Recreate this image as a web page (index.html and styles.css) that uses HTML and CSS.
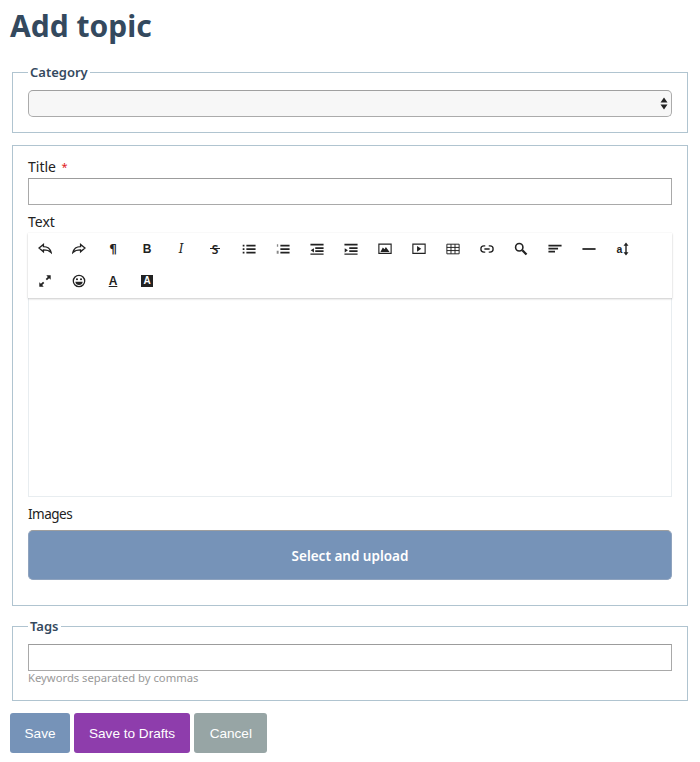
FILE: index.html
```html
<!DOCTYPE html>
<html lang="en">
<head>
<meta charset="utf-8">
<title>Add topic</title>
<link rel="stylesheet" href="styles.css">
</head>
<body>
<main class="page">
  <h1 class="page-title">Add topic</h1>
  <form class="topic-form">
    <fieldset class="group group-category">
      <legend class="group-legend">Category</legend>
      <div class="fake-select">
        <svg class="select-arrows" viewBox="0 0 8 13"><path d="M4 .5 7.500 5.500H.500zM4 12.500.5 7.500h7z"/></svg>
      </div>
    </fieldset>

    <fieldset class="group group-main">
      <label class="field-label">Title <span class="required">*</span></label>
      <input class="text-input" type="text">
      <label class="field-label label-text">Text</label>
      <div class="editor">
        <div class="toolbar">
          <button type="button" class="tool"><svg class="ico" viewBox="0 0 16 16"><path class="line" d="M1.2 6.8 6.2 2.8V5.2C10.5 5.2 13.8 7 15 12 12.6 9.6 10 9 6.2 9V11.2Z"/></svg></button>
          <button type="button" class="tool"><svg class="ico" viewBox="0 0 16 16"><path class="line" d="M14.8 6.8 9.8 2.8V5.2C5.5 5.2 2.2 7 1 12 3.4 9.6 6 9 9.8 9V11.2Z"/></svg></button>
          <button type="button" class="tool glyph glyph-para">¶</button>
          <button type="button" class="tool glyph glyph-b">B</button>
          <button type="button" class="tool glyph glyph-i">I</button>
          <button type="button" class="tool glyph glyph-s">S</button>
          <button type="button" class="tool"><svg class="ico" viewBox="0 0 16 16"><path d="M5 3h10.500v2H5zM5 7h10.500v2H5zM5 11h10.500v2H5zM.8 3h2v2h-2zM.8 7h2v2h-2zM.8 11h2v2h-2z"/></svg></button>
          <button type="button" class="tool"><svg class="ico" viewBox="0 0 16 16"><path d="M5 3h10.500v2H5zM5 7h10.500v2H5zM5 11h10.500v2H5z"/><path class="faint" d="M1 2.500h1.500v3H1zM.8 10h2.200v3.500H.8z"/></svg></button>
          <button type="button" class="tool"><svg class="ico" viewBox="0 0 16 16"><path d="M.5 2h15v2H.500zM6 6h9.500v2H6zM6 9.500h9.500v2H6zM.5 13h15v1.500H.500zM.8 9.500 4.500 7v5z"/></svg></button>
          <button type="button" class="tool"><svg class="ico" viewBox="0 0 16 16"><path d="M.5 2h15v2H.500zM6 6h9.500v2H6zM6 9.500h9.500v2H6zM.5 13h15v1.500H.500zM4.500 9.500.8 7v5z"/></svg></button>
          <button type="button" class="tool"><svg class="ico" viewBox="0 0 16 16"><path class="frame" d="M1 2.500h14v10.500H1z"/><path d="M2.800 11.500 5.500 6.200 7.500 8.200 9 5.800 13.200 11.500z"/></svg></button>
          <button type="button" class="tool"><svg class="ico" viewBox="0 0 16 16"><path class="frame" d="M1 2.500h14v10.500H1z"/><path d="M5.800 4.500 10.500 7.800 5.800 11z"/></svg></button>
          <button type="button" class="tool"><svg class="ico" viewBox="0 0 16 16"><path class="thin" d="M1 2.500h14v11H1zM1 6.200h14M1 9.800h14M5.700 2.500v11M10.300 2.500v11"/></svg></button>
          <button type="button" class="tool"><svg class="ico" viewBox="0 0 16 16"><path class="line" d="M6 4.500H4.500a3.500 3.500 0 0 0 0 7H6M10 4.500h1.500a3.500 3.500 0 0 1 0 7H10M5 8h6"/></svg></button>
          <button type="button" class="tool"><svg class="ico" viewBox="0 0 16 16"><circle class="lens" cx="6" cy="6" r="4.200"/><path class="handle" d="M9.500 9.500 14.300 14.300"/></svg></button>
          <button type="button" class="tool"><svg class="ico" viewBox="0 0 16 16"><path d="M.5 3h15v2H.500zM.5 6.500h11v2H.500zM.5 10h7.500v2H.500z"/></svg></button>
          <button type="button" class="tool"><svg class="ico" viewBox="0 0 16 16"><path d="M.5 7h15v2H.500z"/></svg></button>
          <button type="button" class="tool tool-size"><span class="size-a">a</span><svg class="size-arrow" viewBox="0 0 6 14"><path d="M3 .5 5.500 3.800H3.700V10.200H5.500L3 13.500.5 10.200H2.300V3.800H.500z"/></svg></button>

          <button type="button" class="tool"><svg class="ico" viewBox="0 0 16 16"><path d="M9.500 1.500H14.500V6.500L12.700 4.800 10.200 7.200 8.800 5.800 11.200 3.300zM6.500 14.500H1.500V9.500L3.300 11.200 5.800 8.800 7.200 10.200 4.800 12.700z"/></svg></button>
          <button type="button" class="tool"><svg class="ico" viewBox="0 0 16 16"><circle class="line" cx="8" cy="8" r="6.500"/><circle cx="5.700" cy="6" r="1.200"/><circle cx="10.300" cy="6" r="1.200"/><path d="M3.800 8.800h8.400C12 11.200 10.300 12.600 8 12.600S4 11.200 3.800 8.800z"/></svg></button>
          <button type="button" class="tool glyph glyph-under">A</button>
          <button type="button" class="tool"><span class="glyph-inverse">A</span></button>
        </div>
        <div class="editor-body"></div>
      </div>
      <label class="field-label label-images">Images</label>
      <button type="button" class="upload-btn">Select and upload</button>
    </fieldset>

    <fieldset class="group group-tags">
      <legend class="group-legend">Tags</legend>
      <input class="text-input" type="text">
      <p class="help">Keywords separated by commas</p>
    </fieldset>

    <div class="actions">
      <button type="button" class="btn btn-save">Save</button>
      <button type="button" class="btn btn-drafts">Save to Drafts</button>
      <button type="button" class="btn btn-cancel">Cancel</button>
    </div>
  </form>
</main>
</body>
</html>
```

FILE: styles.css
```css
* { box-sizing: border-box; }

html, body { margin: 0; padding: 0; background: #fff; }

body {
  font-family: "Noto Sans", "Open Sans", sans-serif;
  font-size: 14px;
  color: #222;
}

.page { padding: 0 10px; }

.page-title {
  margin: 0;
  padding-top: 6px;
  height: 62px;
  font-size: 30px;
  line-height: 40px;
  font-weight: 700;
  color: #34495e;
}

.group {
  display: block;
  min-width: 0;
  margin: 0 2px;
  border: 1px solid #b0c4d0;
  padding: 8px 15px 15px;
}

.group-legend {
  padding: 0 2px;
  font-size: 13px;
  line-height: 20px;
  font-weight: 600;
  color: #34495e;
}

.group-main {
  margin-top: 12px;
  padding: 11px 15px 25px;
}

.group-tags {
  margin-top: 10px;
  padding-bottom: 15px;
}

.fake-select {
  display: flex;
  align-items: center;
  justify-content: flex-end;
  height: 27px;
  padding-right: 3px;
  border: 1px solid #ababab;
  border-top-color: #a0a0a0;
  border-radius: 5px;
  background: #f7f7f7;
}

.select-arrows { width: 8px; height: 13px; fill: #222; }

.field-label {
  display: block;
  height: 21px;
  line-height: 19px;
  font-size: 14px;
  color: #222;
}

.required {
  margin-left: 2px;
  color: #e02020;
  font-size: 11px;
  vertical-align: 1px;
}

.label-text {
  margin-top: 7px;
  height: 21px;
}

.label-images {
  margin-top: 7px;
  height: 26px;
  line-height: 21px;
  font-size: 13.500px;
  letter-spacing: -.5px;
}

.text-input {
  display: block;
  width: 100%;
  height: 27px;
  margin: 0;
  padding: 0 4px;
  border: 1px solid #a9a9a9;
  border-top-color: #9c9c9c;
  background: #fff;
  border-radius: 0;
  outline: none;
}

.editor { display: block; }

.toolbar {
  display: flex;
  flex-wrap: wrap;
  align-content: flex-start;
  height: 65px;
  padding-right: 32px;
  background: #fff;
  box-shadow: 0 1px 2px rgba(0, 0, 0, .2), 0 0 1px rgba(0, 0, 0, .07);
  position: relative;
}

.tool {
  position: relative;
  display: flex;
  align-items: center;
  justify-content: center;
  width: 34px;
  height: 32px;
  margin: 0;
  padding: 0;
  border: 0;
  background: none;
  color: #222;
  font-family: "Liberation Sans", sans-serif;
}

.ico { width: 14px; height: 14px; fill: #222; }

.ico .line { fill: none; stroke: #222; stroke-width: 1.500; }
.ico .frame { fill: none; stroke: #222; stroke-width: 1.300; }
.ico .thin { fill: none; stroke: #222; stroke-width: 1.100; }
.ico .lens { fill: none; stroke: #222; stroke-width: 1.800; }
.ico .handle { fill: none; stroke: #222; stroke-width: 2.600; }
.ico .faint { fill: #888; }

.glyph { font-size: 12px; font-weight: 700; }
.glyph-para { font-family: "DejaVu Sans", sans-serif; font-size: 12px; }
.glyph-i { font-family: "DejaVu Serif", serif; font-style: italic; font-size: 12px; font-weight: 400; }
.glyph-s { font-family: "Noto Sans", sans-serif; font-weight: 600; font-size: 12px; }
.glyph-s::after {
  content: "";
  position: absolute;
  left: 12px;
  right: 12px;
  top: 15px;
  height: 1px;
  background: #222;
}
.glyph-under { text-decoration: underline; font-size: 12px; }

.glyph-inverse {
  display: block;
  width: 12px;
  height: 12px;
  background: #222;
  color: #fff;
  font-size: 10px;
  line-height: 12px;
  font-weight: 700;
  text-align: center;
}

.tool-size { gap: 1px; }
.size-a { font-size: 10.500px; font-weight: 700; }
.size-arrow { width: 6px; height: 14px; fill: #222; }

.editor-body {
  height: 199px;
  border: 1px solid #e8edf0;
  border-top: 0;
  background: #fff;
}

.upload-btn {
  display: block;
  width: 100%;
  height: 50px;
  margin: 0;
  padding: 2px 0 0;
  border: 1px solid #8fa3be;
  border-top-color: #9e9e9e;
  border-radius: 5px;
  background: #7693b8;
  color: #fff;
  font-family: "Noto Sans", sans-serif;
  font-size: 13.500px;
  font-weight: 600;
}

.help {
  margin: 0;
  height: 14px;
  font-size: 11.250px;
  line-height: 14px;
  color: #999;
}

.actions {
  display: flex;
  gap: 4px;
  margin-top: 12px;
}

.btn {
  height: 40px;
  padding: 0 15px;
  border: 0;
  border-radius: 3px;
  color: #fff;
  font-family: "Liberation Sans", sans-serif;
  font-size: 13.600px;
}

.btn-save { background: #7693b8; padding: 0 14.500px; }
.btn-drafts { background: #8e3dac; }
.btn-cancel { background: #97a5a5; padding: 0 15.500px; }
```
